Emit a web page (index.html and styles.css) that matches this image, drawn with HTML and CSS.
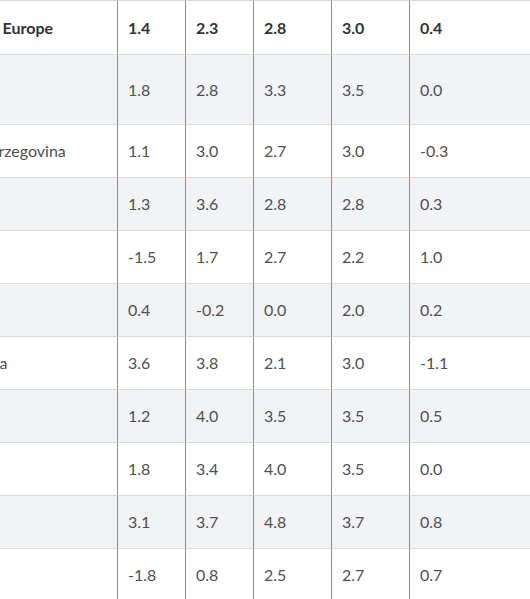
FILE: index.html
```html
<!DOCTYPE html>
<html lang="en">
<head>
<meta charset="utf-8">
<title>Growth table</title>
<link rel="stylesheet" href="styles.css">
</head>
<body>
<div class="table">
  <div class="row head">
    <div class="cell name">South-Eastern Europe</div>
    <div class="cell num">1.4</div><div class="cell num">2.3</div><div class="cell num">2.8</div><div class="cell num">3.0</div><div class="cell num">0.4</div>
  </div>
  <div class="row alt">
    <div class="cell name">Albania<br>(preliminary)</div>
    <div class="cell num">1.8</div><div class="cell num">2.8</div><div class="cell num">3.3</div><div class="cell num">3.5</div><div class="cell num">0.0</div>
  </div>
  <div class="row">
    <div class="cell name">Bosnia and Herzegovina</div>
    <div class="cell num">1.1</div><div class="cell num">3.0</div><div class="cell num">2.7</div><div class="cell num">3.0</div><div class="cell num">-0.3</div>
  </div>
  <div class="row alt">
    <div class="cell name">Bulgaria</div>
    <div class="cell num">1.3</div><div class="cell num">3.6</div><div class="cell num">2.8</div><div class="cell num">2.8</div><div class="cell num">0.3</div>
  </div>
  <div class="row">
    <div class="cell name">Croatia</div>
    <div class="cell num">-1.5</div><div class="cell num">1.7</div><div class="cell num">2.7</div><div class="cell num">2.2</div><div class="cell num">1.0</div>
  </div>
  <div class="row alt">
    <div class="cell name">Kosovo</div>
    <div class="cell num">0.4</div><div class="cell num">-0.2</div><div class="cell num">0.0</div><div class="cell num">2.0</div><div class="cell num">0.2</div>
  </div>
  <div class="row">
    <div class="cell name">FYR Macedonia</div>
    <div class="cell num">3.6</div><div class="cell num">3.8</div><div class="cell num">2.1</div><div class="cell num">3.0</div><div class="cell num">-1.1</div>
  </div>
  <div class="row alt">
    <div class="cell name">Montenegro</div>
    <div class="cell num">1.2</div><div class="cell num">4.0</div><div class="cell num">3.5</div><div class="cell num">3.5</div><div class="cell num">0.5</div>
  </div>
  <div class="row">
    <div class="cell name">Romania</div>
    <div class="cell num">1.8</div><div class="cell num">3.4</div><div class="cell num">4.0</div><div class="cell num">3.5</div><div class="cell num">0.0</div>
  </div>
  <div class="row alt">
    <div class="cell name">Serbia</div>
    <div class="cell num">3.1</div><div class="cell num">3.7</div><div class="cell num">4.8</div><div class="cell num">3.7</div><div class="cell num">0.8</div>
  </div>
  <div class="row">
    <div class="cell name">Slovenia</div>
    <div class="cell num">-1.8</div><div class="cell num">0.8</div><div class="cell num">2.5</div><div class="cell num">2.7</div><div class="cell num">0.7</div>
  </div>
</div>
</body>
</html>
```
FILE: styles.css
```css
html, body {
  margin: 0;
  padding: 0;
  overflow: hidden;
  background: #ffffff;
}
body {
  font-family: Lato, "Open Sans", sans-serif;
  font-size: 16px;
  color: #505050;
}
.table {
  display: grid;
  grid-template-columns: 230px 68px 68px 78px 78px 200px;
  margin-left: -113px;
  width: 722px;
}
.row {
  display: contents;
}
.cell {
  box-sizing: border-box;
  display: flex;
  align-items: center;
  padding: 17px 10px 18px 10px;
  line-height: 17px;
  border-bottom: 1px solid #d9d9d9;
  white-space: nowrap;
}
.cell.name {
  display: block;
  align-self: stretch;
}
.num {
  border-left: 1px solid #8c8c8c;
}
.head .cell {
  border-top: 1px solid #d9d9d9;
  padding-top: 18px;
  font-weight: 700;
  color: #333333;
}
.alt .cell {
  background: #f2f3f5;
}
```
